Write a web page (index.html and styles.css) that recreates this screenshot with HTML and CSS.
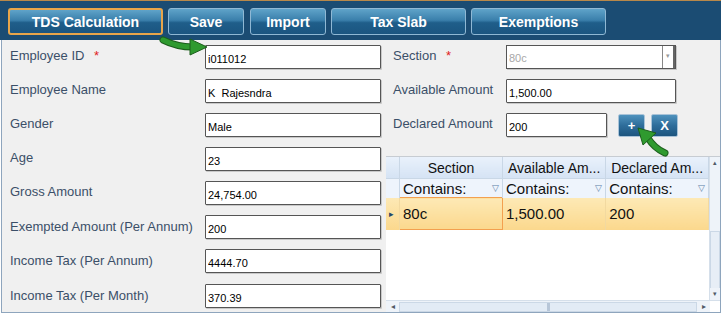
FILE: index.html
```html
<!DOCTYPE html>
<html>
<head>
  <link rel="stylesheet" href="styles.css">
</head>
<body>

  <div class="app">
    <div class="toolbar">
      <button class="tool-button active wide">TDS Calculation</button>
      <button class="tool-button small">Save</button>
      <button class="tool-button small">Import</button>
      <button class="tool-button large">Tax Slab</button>
      <button class="tool-button large">Exemptions</button>
    </div>

    <div class="panel">
      <!-- Employee details -->
      <div class="fields">
        <div class="field-row">
          <label>Employee ID <span class="req">*</span></label>
          <input type="text" value="i011012">
        </div>
        <div class="field-row">
          <label>Employee Name</label>
          <input type="text" value="K  Rajesndra">
        </div>
        <div class="field-row">
          <label>Gender</label>
          <input type="text" value="Male">
        </div>
        <div class="field-row">
          <label>Age</label>
          <input type="text" value="23">
        </div>
        <div class="field-row">
          <label>Gross Amount</label>
          <input type="text" value="24,754.00">
        </div>
        <div class="field-row">
          <label>Exempted Amount (Per Annum)</label>
          <input type="text" value="200">
        </div>
        <div class="field-row">
          <label>Income Tax (Per Annum)</label>
          <input type="text" value="4444.70">
        </div>
        <div class="field-row last">
          <label>Income Tax (Per Month)</label>
          <input type="text" value="370.39">
        </div>
      </div>

      <!-- Exemption entry -->
      <div class="exemptions">
        <div class="entry">
          <div class="field-row">
            <label>Section <span class="req">*</span></label>
            <div class="select-box">
              <span class="placeholder">80c</span>
              <span class="drop">&#9662;</span>
            </div>
          </div>
          <div class="field-row">
            <label>Available Amount</label>
            <input type="text" value="1,500.00">
          </div>
          <div class="field-row">
            <label>Declared Amount</label>
            <input type="text" class="short" value="200">
            <button class="mini-button plus">+</button>
            <button class="mini-button">X</button>
          </div>
        </div>

        <div class="grid">
          <div class="grid-main">
            <table class="grid-table">
              <thead>
                <tr class="head-row">
                  <th class="indicator"></th>
                  <th>Section</th>
                  <th>Available Am...</th>
                  <th>Declared Am...</th>
                </tr>
                <tr class="filter-row">
                  <td class="indicator"></td>
                  <td><span>Contains:</span><span class="funnel">&#9661;</span></td>
                  <td><span>Contains:</span><span class="funnel">&#9661;</span></td>
                  <td><span>Contains:</span><span class="funnel">&#9661;</span></td>
                </tr>
              </thead>
              <tbody>
                <tr class="data-row">
                  <td class="indicator">&#9656;</td>
                  <td class="current">80c</td>
                  <td>1,500.00</td>
                  <td>200</td>
                </tr>
              </tbody>
            </table>
            <div class="vscroll">
              <span class="arrow">&#9652;</span>
              <span class="thumb"></span>
              <span class="arrow">&#9662;</span>
            </div>
          </div>
          <div class="hscroll">
            <span class="arrow">&#9666;</span>
            <span class="track"><span class="grip"></span></span>
            <span class="arrow">&#9656;</span>
            <span class="corner"></span>
          </div>
        </div>
      </div>
    </div>

    <!-- Callout arrows -->
    <svg class="callout callout-id" width="52" height="22" viewBox="0 0 52 22">
      <path d="M4 5 Q18 12 34 12" stroke="#1d5e1d" stroke-width="7" fill="none" stroke-linecap="round"/>
      <path d="M4 5 Q18 12 34 12" stroke="#2f9a2f" stroke-width="5" fill="none" stroke-linecap="round"/>
      <polygon points="31,4 48,12 31,20" fill="#2f9a2f" stroke="#1d5e1d" stroke-width="1"/>
    </svg>
    <svg class="callout callout-add" width="36" height="32" viewBox="0 0 36 32">
      <path d="M30 27 Q19 22 13 12" stroke="#1d5e1d" stroke-width="7" fill="none" stroke-linecap="round"/>
      <path d="M30 27 Q19 22 13 12" stroke="#2f9a2f" stroke-width="5" fill="none" stroke-linecap="round"/>
      <polygon points="3,2 21,7 8,19" fill="#2f9a2f" stroke="#1d5e1d" stroke-width="1"/>
    </svg>
  </div>

</body>
</html>
```

FILE: styles.css
```css
body {
  margin: 0;
  font-family: "Liberation Sans", Arial, sans-serif;
  background-color: #fff;
}
.app {
  position: relative;
  width: 721px;
}
.toolbar {
  display: flex;
  gap: 5px;
  height: 40px;
  padding: 7px 0 0 8px;
  box-sizing: border-box;
  background-color: #1b4c73;
  border-top: 1px solid #b8884a;
}
.tool-button {
  height: 27px;
  font-family: "Liberation Sans", Arial, sans-serif;
  font-size: 14px;
  font-weight: bold;
  color: #fff;
  background: linear-gradient(#5fa3c9, #3a7fab 45%, #1f5e8a 55%, #1b5580);
  border: 1px solid #8fb8d4;
  border-radius: 3px;
  padding: 0;
}
.tool-button.active {
  border: 2px solid #e8a54a;
}
.tool-button.wide { width: 155px; }
.tool-button.small { width: 76px; }
.tool-button.small + .tool-button.small { margin-left: 1px; }
.tool-button.large { width: 135px; }

.panel {
  display: flex;
  height: 272px;
  margin-left: 1px;
  background-color: #f0f0f0;
  border-left: 1px solid #8ea5bd;
  border-bottom: 1px solid #8ea5bd;
  border-right: 1px solid #8ea5bd;
}
.fields {
  width: 384px;
  padding: 5px 0 0 8px;
  box-sizing: border-box;
}
.field-row {
  display: flex;
  align-items: flex-start;
  height: 34px;
}
.fields .field-row.last {
  margin-top: 1px;
}
label {
  width: 195px;
  font-size: 13px;
  line-height: 14px;
  padding-top: 4px;
  color: #3b4f68;
}
.fields .field-row:nth-child(n+6) label {
  padding-top: 5px;
}
.req {
  color: #e02020;
  margin-left: 6px;
}
input {
  width: 176px;
  height: 24px;
  box-sizing: border-box;
  border: 1px solid #555;
  border-radius: 1px;
  padding: 3px 2px 0 2px;
  font-family: "Liberation Sans", Arial, sans-serif;
  font-size: 11px;
  color: #000;
  background-color: #fff;
  box-shadow: 1px 1px 0 #c8c8c8;
}
.exemptions {
  flex: 1;
  display: flex;
  flex-direction: column;
}
.entry {
  padding: 5px 0 0 7px;
  height: 111px;
}
.entry label {
  width: 113px;
}
.entry input {
  width: 170px;
}
.entry input.short {
  width: 101px;
}
.select-box {
  display: flex;
  justify-content: space-between;
  width: 170px;
  height: 24px;
  box-sizing: border-box;
  border: 1px solid #555;
  background-color: #fff;
  box-shadow: 1px 1px 0 #c8c8c8;
}
.placeholder {
  font-size: 11px;
  color: #a8a8a8;
  padding: 6px 0 0 2px;
}
.drop {
  width: 10px;
  font-size: 7px;
  color: #999;
  text-align: center;
  padding-top: 6px;
  border-left: 1px solid #888;
  border-right: 2px solid #666;
}
.mini-button {
  width: 27px;
  height: 23px;
  margin: 1px 0 0 11px;
  padding: 0;
  font-family: "Liberation Sans", Arial, sans-serif;
  font-size: 13px;
  font-weight: bold;
  color: #fff;
  background: linear-gradient(#4f92bd, #2e6d9a 50%, #1d557f);
  border: 1px solid #a9c3d8;
  border-radius: 2px;
}
.mini-button + .mini-button {
  margin-left: 6px;
}

.grid {
  flex: 1;
  display: flex;
  flex-direction: column;
  background-color: #fff;
  border-top: 1px solid #c7ccd2;
}
.grid-main {
  flex: 1;
  display: flex;
}
.grid-table {
  flex: 1;
  border-collapse: collapse;
  align-self: flex-start;
  font-size: 14px;
  color: #111;
}
.grid-table th,
.grid-table td {
  border-right: 1px solid #c9d7e6;
  padding: 0 3px;
  text-align: left;
}
.grid-table .indicator {
  width: 7px;
  padding: 0 3px;
  font-size: 9px;
  color: #24466a;
}
.head-row th {
  height: 21px;
  font-weight: normal;
  text-align: center;
  background: linear-gradient(#e9f1fb, #d5e3f4);
  border-bottom: 1px solid #c9d7e6;
  white-space: nowrap;
}
.filter-row td {
  height: 18px;
  font-size: 15px;
  background-color: #eef4fc;
}
.filter-row td span:first-child {
  float: left;
}
.funnel {
  float: right;
  font-size: 9px;
  color: #5a7fa8;
  padding-top: 3px;
}
.data-row td {
  height: 31px;
  font-size: 15px;
  background: linear-gradient(#fde9b5, #fbd88d);
  border-right-color: #f2d9a0;
}
.data-row td.current {
  border: 1px solid #f3a04f;
  width: 96px;
}
.vscroll {
  width: 10px;
  display: flex;
  flex-direction: column;
  align-items: center;
  background-color: #eef3f9;
  border-left: 1px solid #d5dfea;
}
.vscroll .arrow {
  font-size: 7px;
  color: #505a66;
  height: 12px;
  line-height: 12px;
}
.vscroll .thumb {
  flex: 1;
  width: 8px;
  margin: 62px 0 0;
  background-color: #e7eef6;
  border: 1px solid #cbd8e6;
  border-bottom: none;
}
.hscroll {
  display: flex;
  height: 11px;
  align-items: center;
  background-color: #eef3f9;
  border-top: 1px solid #d5dfea;
}
.hscroll .arrow {
  width: 13px;
  font-size: 8px;
  color: #505a66;
  text-align: center;
}
.hscroll .track {
  flex: 1;
  height: 8px;
  display: flex;
  justify-content: center;
  background-color: #e2ebf5;
  border: 1px solid #cbd8e6;
}
.hscroll .grip {
  width: 3px;
  background-color: #b7c6d8;
}
.hscroll .corner {
  width: 10px;
  height: 11px;
  background-color: #fff;
}
.callout {
  position: absolute;
}
.callout-id {
  left: 159px;
  top: 35px;
}
.callout-add {
  left: 635px;
  top: 126px;
}
```
